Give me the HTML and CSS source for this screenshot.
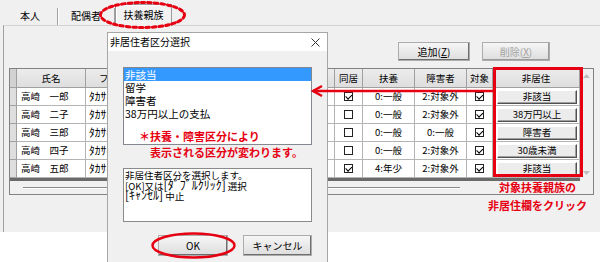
FILE: index.html
```html
<!DOCTYPE html>
<html lang="ja">
<head>
<meta charset="utf-8">
<title>扶養親族</title>
<link rel="stylesheet" href="styles.css">
</head>
<body>
<div class="window">
  <div class="tabs">
    <div class="tab tab-1">本人</div>
    <div class="tab tab-2">配偶者</div>
    <div class="tab tab-active">扶養親族</div>
  </div>
  <div class="panel">
    <div class="toolbar">
      <button class="btn btn-add">追加(<u>Z</u>)</button>
      <button class="btn btn-del" disabled>削除(<u>X</u>)</button>
    </div>
    <div class="grid">
      <div class="gmain">
        <div class="gtable">
          <div class="grow ghead">
            <div class="c rh"></div>
            <div class="c">氏名</div>
            <div class="c kana-h">フリガナ</div>
            <div class="c">続柄</div>
            <div class="c">生年月日</div>
            <div class="c">同居</div>
            <div class="c">扶養</div>
            <div class="c">障害者</div>
            <div class="c">対象</div>
            <div class="c">非居住</div>
          </div>
          <div class="grow">
            <div class="c rh"></div>
            <div class="c name">高崎　一郎</div>
            <div class="c kana">ﾀｶｻｷ ｲﾁﾛｳ</div>
            <div class="c"></div>
            <div class="c"></div>
            <div class="c cb"><span class="chk on"></span></div>
            <div class="c ctr">0:一般</div>
            <div class="c ctr">2:対象外</div>
            <div class="c cb"><span class="chk on"></span></div>
            <div class="c nbc"><span class="nb">非該当</span></div>
          </div>
          <div class="grow">
            <div class="c rh"></div>
            <div class="c name">高崎　二子</div>
            <div class="c kana">ﾀｶｻｷ ﾌﾀｺ</div>
            <div class="c"></div>
            <div class="c"></div>
            <div class="c cb"><span class="chk"></span></div>
            <div class="c ctr">0:一般</div>
            <div class="c ctr">2:対象外</div>
            <div class="c cb"><span class="chk on"></span></div>
            <div class="c nbc"><span class="nb">38万円以上</span></div>
          </div>
          <div class="grow">
            <div class="c rh"></div>
            <div class="c name">高崎　三郎</div>
            <div class="c kana">ﾀｶｻｷ ｻﾌﾞﾛｳ</div>
            <div class="c"></div>
            <div class="c"></div>
            <div class="c cb"><span class="chk"></span></div>
            <div class="c ctr">0:一般</div>
            <div class="c ctr">0:一般</div>
            <div class="c cb"><span class="chk on"></span></div>
            <div class="c nbc"><span class="nb">障害者</span></div>
          </div>
          <div class="grow">
            <div class="c rh"></div>
            <div class="c name">高崎　四子</div>
            <div class="c kana">ﾀｶｻｷ ﾖﾂｺ</div>
            <div class="c"></div>
            <div class="c"></div>
            <div class="c cb"><span class="chk"></span></div>
            <div class="c ctr">0:一般</div>
            <div class="c ctr">2:対象外</div>
            <div class="c cb"><span class="chk on"></span></div>
            <div class="c nbc"><span class="nb">30歳未満</span></div>
          </div>
          <div class="grow">
            <div class="c rh"></div>
            <div class="c name">高崎　五郎</div>
            <div class="c kana">ﾀｶｻｷ ｺﾞﾛｳ</div>
            <div class="c"></div>
            <div class="c"></div>
            <div class="c cb"><span class="chk on"></span></div>
            <div class="c ctr">4:年少</div>
            <div class="c ctr">2:対象外</div>
            <div class="c cb"><span class="chk on"></span></div>
            <div class="c nbc"><span class="nb">非該当</span></div>
          </div>
          <div class="thick"></div>
        </div>
        <div class="vscroll">
          <svg class="arr" width="7" height="4" viewBox="0 0 7 4"><path d="M0 4 L3.5 0 L7 4 Z"/></svg>
          <svg class="arr" width="7" height="4" viewBox="0 0 7 4"><path d="M0 0 L3.5 4 L7 0 Z"/></svg>
        </div>
      </div>
      <div class="hscroll"><div class="hthumb"></div></div>
    </div>
  </div>
</div>

<div class="dialog">
  <div class="dtitle">
    <span class="dtitle-text">非居住者区分選択</span>
    <svg class="dclose" width="9" height="9" viewBox="0 0 9 9"><path d="M0.5 0.5 L8.5 8.5 M8.5 0.5 L0.5 8.5"/></svg>
  </div>
  <div class="dbody">
    <div class="listbox">
      <div class="li sel">非該当</div>
      <div class="li">留学</div>
      <div class="li">障害者</div>
      <div class="li">38万円以上の支払</div>
    </div>
    <div class="msgbox">
      <div class="ml">非居住者区分を選択します。</div>
      <div class="ml">[OK]又は<span class="hw">[ﾀﾞﾌﾞﾙｸﾘｯｸ]</span> 選択</div>
      <div class="ml"><span class="hw">[ｷｬﾝｾﾙ]</span> 中止</div>
    </div>
    <div class="dbtns">
      <button class="btn btn-ok">OK</button>
      <button class="btn btn-cancel">キャンセル</button>
    </div>
  </div>
</div>

<div class="note note-1">＊扶養・障害区分により</div>
<div class="note note-2">表示される区分が変わります。</div>
<div class="note note-3">対象扶養親族の</div>
<div class="note note-4">非居住欄をクリック</div>

<div class="redbox"></div>
<svg class="redarrow" width="184" height="14" viewBox="0 0 184 14">
  <path d="M2 7 H183" />
  <path d="M11 2 L2 7 L11 12" />
</svg>
<svg class="ring ring-tab" width="89" height="30" viewBox="0 0 89 30">
  <ellipse cx="44.5" cy="15" rx="42" ry="12.5"/>
</svg>
<svg class="ring ring-ok" width="87" height="29" viewBox="0 0 87 29">
  <ellipse cx="43.5" cy="14.5" rx="41" ry="12"/>
</svg>
</body>
</html>
```
FILE: styles.css
```css
* { box-sizing: border-box; margin: 0; padding: 0; }
html, body { width: 600px; height: 262px; overflow: hidden; }
body {
  position: relative;
  background: #ffffff;
  font-family: "Noto Sans CJK JP", "Noto Sans", sans-serif;
  font-size: 10px;
  color: #000;
}

/* main window */
.window { height: 232px; background: #f0f0f0; display: flex; flex-direction: column; }
.tabs { height: 25px; display: flex; align-items: flex-end; padding-left: 3px; }
.tab {
  height: 17px; line-height: 16px; text-align: center;
  border-right: 1px solid #a0a0a0;
  box-shadow: 1px 0 0 #ffffff;
}
.tab-1 { width: 55px; }
.tab-2 { width: 57px; }
.tab-active {
  width: 57px; height: 22px; line-height: 19px;
  border: 1px solid #9a9a9a; border-bottom: none;
  background: #f2f2f2;
  box-shadow: inset 1px 1px 0 #ffffff;
  margin-bottom: -1px;
  position: relative;
}

.panel {
  flex: 1;
  margin-left: 3px;
  border-top: 1px solid #d2d2d2;
  border-left: 1px solid #a0a0a0;
  padding: 16px 0 0 5px;
}
.toolbar { display: flex; justify-content: flex-end; gap: 12px; padding-right: 50px; height: 19px; margin-bottom: 7px; }

.btn {
  font-family: "Noto Sans CJK JP", "Noto Sans", sans-serif;
  font-size: 10px; color: #000;
  background: linear-gradient(#f6f6f6, #dddddd);
  border: 1px solid #acacac;
  box-shadow: inset -1px -1px 0 #6e6e6e;
  height: 19px; line-height: 15px;
}
.btn u { text-decoration: underline; }
.btn-add { width: 72px; }
.btn-del { width: 68px; color: #a3a3a3; box-shadow: inset -1px -1px 0 #9a9a9a; }

/* grid */
.grid { width: 585px; border: 1px solid #828282; background: #f0f0f0; }
.gmain { display: flex; }
.gtable { width: 570px; }
.grow {
  display: grid;
  grid-template-columns: 7px 69px 114px 70px 65px 28px 52px 52px 26px 87px;
  height: 18px;
  background: #ffffff;
}
.c {
  border-right: 1px solid #b4b4b4;
  border-bottom: 1px solid #b4b4b4;
  line-height: 17px;
  font-size: 9.5px;
  white-space: nowrap;
  overflow: hidden;
}
.ghead { height: 19px; }
.ghead .c {
  background: linear-gradient(#ececec, #dedede);
  border-color: #a0a0a0;
  text-align: center;
  line-height: 18px;
}
.ghead .kana-h { text-align: left; padding-left: 13px; }
.rh { background: #dedede; border-color: #a0a0a0; }
.ghead .rh { background: #d2d2d2; }
.name { padding-left: 4px; }
.kana { padding-left: 3px; font-size: 11.5px; }
.ctr { text-align: center; }
.cb { display: flex; align-items: center; justify-content: center; }
.chk {
  width: 9px; height: 9px; border: 1px solid #222; background: #fff;
  position: relative;
}
.chk.on::after {
  content: "";
  position: absolute; left: 1.5px; top: 0px;
  width: 2.5px; height: 4.5px;
  border-right: 1.5px solid #000; border-bottom: 1.5px solid #000;
  transform: rotate(45deg);
}
.nbc { padding: 2px 2px 0 4px; }
.nb {
  display: block; height: 14px; line-height: 11px;
  text-align: center;
  background: #ececec;
  border: 1px solid;
  border-color: #ffffff #505050 #505050 #ffffff;
  box-shadow: inset -1px -1px 0 #a0a0a0;
  font-size: 9.5px;
}
.thick { height: 3px; background: #6a6a6a; }
.vscroll {
  width: 13px; display: flex; flex-direction: column; justify-content: space-between; align-items: center;
  padding: 5px 0 6px;
  background: #f0f0f0;
}
.arr path { fill: #bdbdbd; }
.hscroll { height: 13px; position: relative; }
.hthumb {
  position: absolute; left: 13px; top: 6px; width: 437px; height: 2px;
  border-top: 1px solid #8a8a8a; border-bottom: 1px solid #ffffff;
}

/* dialog */
.dialog {
  position: absolute; left: 107px; top: 32px;
  width: 221px; height: 230px;
  background: #f0f0f0;
  border: 1px solid #a6a6a6; border-bottom: none;
}
.dtitle {
  height: 18px; background: #ffffff;
  display: flex; align-items: center; justify-content: space-between;
  padding: 0 7px 0 2px;
}
.dtitle-text { font-size: 10px; line-height: 18px; }
.dclose path { stroke: #333; stroke-width: 1; fill: none; }
.dbody { padding: 16px 0 0 15px; }
.listbox {
  width: 189px; height: 78px;
  background: #fff; border: 1px solid #828790;
  font-size: 10.5px;
}
.li { height: 13px; line-height: 13px; padding-left: 1px; white-space: nowrap; }
.li.sel { background: #3399ff; color: #fff; }
.msgbox {
  margin-top: 23px;
  width: 189px; height: 54px;
  background: #fff; border: 1px solid #8a8a8a;
  padding: 1px 0 0 1px;
  font-size: 9.5px;
}
.ml { height: 10px; line-height: 10px; white-space: nowrap; }
.hw { font-size: 12px; line-height: 10px; }
.dbtns { display: flex; gap: 15px; margin: 13px 0 0 35px; }
.btn-ok { width: 70px; height: 21px; }
.btn-cancel { width: 69px; height: 21px; }

/* annotations */
.note {
  position: absolute;
  color: #e60012; font-weight: bold;
  font-size: 11px; line-height: 13px;
  white-space: nowrap;
}
.note-1 { left: 139px; top: 130px; }
.note-2 { left: 150px; top: 146px; }
.note-3 { left: 499px; top: 181px; }
.note-4 { left: 488px; top: 199px; }

.redbox {
  position: absolute; left: 493px; top: 67px;
  width: 90px; height: 110px;
  border: 3px solid #e60012;
}
.redarrow { position: absolute; left: 311px; top: 84px; }
.redarrow path { stroke: #e60012; stroke-width: 2.5; fill: none; }

.ring { position: absolute; }
.ring ellipse { fill: none; stroke: #e60012; }
.ring-tab { left: 98px; top: 0px; }
.ring-tab ellipse { stroke-width: 3; stroke-dasharray: 3.5 3; stroke-linecap: round; }
.ring-ok { left: 150px; top: 231px; }
.ring-ok ellipse { stroke-width: 2.5; }
```
